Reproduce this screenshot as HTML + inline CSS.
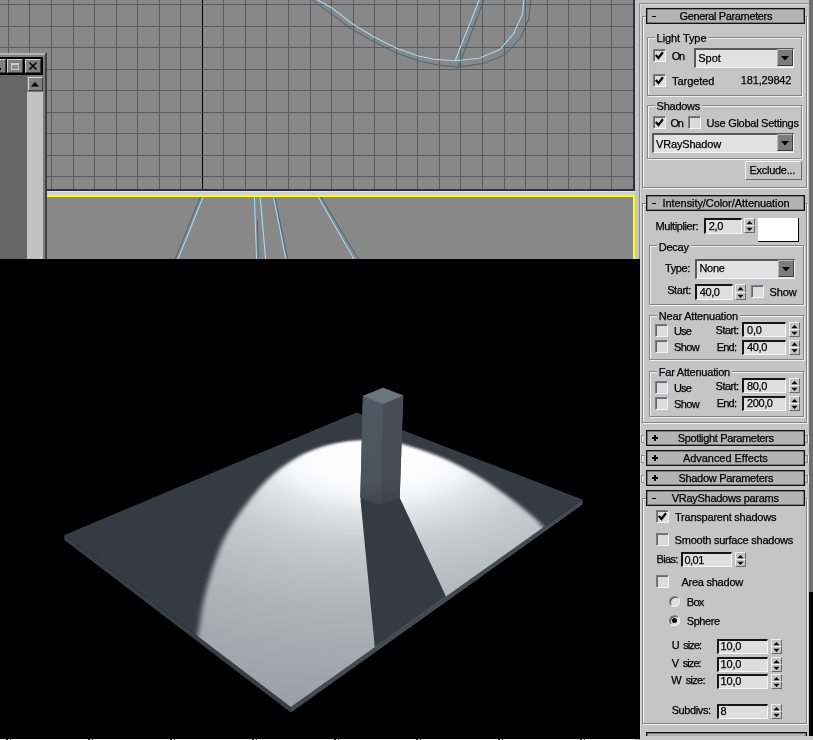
<!DOCTYPE html><html><head><meta charset="utf-8"><title>3ds Max light parameters</title><style>
html,body{margin:0;padding:0;}
body{width:813px;height:740px;overflow:hidden;position:relative;background:#c5c5c5;font-family:"Liberation Sans",sans-serif;font-size:11px;line-height:13px;color:#000;}
.a{position:absolute;}
.t{position:absolute;white-space:nowrap;height:13px;line-height:13px;opacity:.999;-webkit-text-stroke:0.25px #000;}
svg{position:absolute;left:0;top:0;}
.grp{position:absolute;border:1px solid #848484;box-shadow:1px 1px 0 #f2f2f2, inset 1px 1px 0 #f2f2f2;box-sizing:border-box;}
.gl{position:absolute;background:#c5c5c5;height:13px;line-height:13px;white-space:nowrap;padding:0 2px;}
.gl span{opacity:.999;-webkit-text-stroke:0.25px #000;}
.hdr{position:absolute;box-sizing:border-box;border:1px solid #111;background:#b3b3b3;box-shadow:inset 0 0 0 0.5px #444;}
.cb{position:absolute;width:13px;height:13px;box-sizing:border-box;background:#dcdcdc;border-top:1px solid #7c7c7c;border-left:1px solid #7c7c7c;border-right:1px solid #f4f4f4;border-bottom:1px solid #f4f4f4;box-shadow:inset 1px 1px 0 #666a70;}
.fld{position:absolute;box-sizing:border-box;background:#dedede;border-top:2px solid #161616;border-left:2px solid #161616;border-right:1px solid #f6f6f6;border-bottom:1px solid #f6f6f6;}
.dd{position:absolute;box-sizing:border-box;background:#e2e2e2;border-top:2px solid #5a5a5a;border-left:2px solid #5a5a5a;border-right:1px solid #f6f6f6;border-bottom:1px solid #f6f6f6;}
.ddb{position:absolute;box-sizing:border-box;background:#7c7c7c;border-top:1px solid #b8b8b8;border-left:1px solid #b8b8b8;border-right:1px solid #3c3c3c;border-bottom:1px solid #3c3c3c;}
.sp{position:absolute;box-sizing:border-box;width:11px;background:#c2c2c2;border-top:1px solid #f0f0f0;border-left:1px solid #f0f0f0;border-right:1px solid #6a6a6a;border-bottom:1px solid #6a6a6a;}
.btn{position:absolute;box-sizing:border-box;background:#c5c5c5;border-top:1px solid #f4f4f4;border-left:1px solid #f4f4f4;border-right:1px solid #6a6a6a;border-bottom:1px solid #6a6a6a;}
.rd{position:absolute;width:11px;height:11px;box-sizing:border-box;border-radius:50%;background:#e0e0e0;border:1px solid #808080;border-right-color:#f4f4f4;border-bottom-color:#f4f4f4;box-shadow:inset 1px 1px 0 #505050;}
</style></head><body>
<div class="a" style="left:0px;top:0px;width:633px;height:189px;background:#888888;"></div>
<svg width="640" height="260" viewBox="0 0 640 260"><path d="M8.5 0V189 M29.5 0V189 M51.5 0V189 M73.5 0V189 M94.5 0V189 M116.5 0V189 M137.5 0V189 M159.5 0V189 M180.5 0V189 M223.5 0V189 M245.5 0V189 M266.5 0V189 M288.5 0V189 M310.5 0V189 M331.5 0V189 M353.5 0V189 M374.5 0V189 M396.5 0V189 M417.5 0V189 M439.5 0V189 M460.5 0V189 M482.5 0V189 M504.5 0V189 M525.5 0V189 M547.5 0V189 M568.5 0V189 M590.5 0V189 M611.5 0V189 M0 4.5H633 M0 26.5H633 M0 47.5H633 M0 69.5H633 M0 90.5H633 M0 112.5H633 M0 133.5H633 M0 155.5H633 M0 176.5H633" stroke="#5c5c5c" stroke-width="1" fill="none"/><path d="M202.5 0V189" stroke="#000" stroke-width="1" fill="none"/><path d="M312.0 0.0 L332.0 14.4 L351.0 28.8 L373.6 41.6 L396.0 52.8 L418.3 60.8 L437.5 65.0 L458.3 67.2 L483.9 63.3 L504.7 55.0 L520.7 37.7 L528.7 19.2 L530.9 0.0 M458.3 67.2L483.9 0" stroke="#4c6472" stroke-width="1" fill="none"/><path d="M317.6 0.0 L332.0 8.0 L351.2 23.0 L373.6 36.8 L396.0 48.0 L418.3 56.0 L434.3 59.2 L455.1 60.8 L479.1 58.2 L499.9 49.6 L513.6 33.6 L522.3 14.4 L523.9 0.0 M455.1 60.8L479.1 0" stroke="#a6d8f2" stroke-width="1.1" fill="none"/></svg>
<div class="a" style="left:47px;top:189px;width:588px;height:2px;background:#2c3244;"></div>
<div class="a" style="left:633px;top:0px;width:2px;height:191px;background:#2c3244;"></div>
<div class="a" style="left:47px;top:191px;width:588px;height:4px;background:#cfcfd2;"></div>
<div class="a" style="left:47px;top:191px;width:588px;height:1px;background:#e2e4e2;"></div>
<div class="a" style="left:47px;top:195px;width:588px;height:64px;background:#888888;"></div>
<div class="a" style="left:47px;top:195px;width:588px;height:2px;background:#ffff00;"></div>
<div class="a" style="left:633px;top:195px;width:2px;height:64px;background:#ffff00;"></div>
<svg width="640" height="260" viewBox="0 0 640 260"><path d="M200.4 197L175.2 259 M257.6 220L258.2 259 M275 197L287.6 259 M320.8 197L358.3 259" stroke="#4c6472" stroke-width="1" fill="none"/><path d="M203.1 197L178 259 M254.4 197L256.6 259 M260.2 197L265.6 259 M273.6 197L285.8 259 M318.3 197L353.9 259" stroke="#a6d8f2" stroke-width="1.1" fill="none"/></svg>
<div class="a" style="left:0px;top:53px;width:47px;height:206px;background:#808080;"></div>
<div class="a" style="left:0px;top:53px;width:45px;height:2px;background:#b4b4b4;"></div>
<div class="a" style="left:45px;top:53px;width:2px;height:206px;background:#404040;"></div>
<div class="a" style="left:43px;top:55px;width:2px;height:204px;background:#7c7c7c;"></div>
<div class="a" style="left:0px;top:57px;width:43px;height:18px;background:#000;"></div>
<div class="a" style="left:-10px;top:59px;width:16px;height:14px;box-sizing:border-box;background:#808080;border-top:1px solid #d0d0d0;border-left:1px solid #d0d0d0;border-right:1px solid #404040;border-bottom:1px solid #404040;"></div>
<div class="a" style="left:0px;top:68px;width:1px;height:2px;background:#000;"></div>
<div class="a" style="left:7px;top:59px;width:16px;height:14px;box-sizing:border-box;background:#808080;border-top:1px solid #d0d0d0;border-left:1px solid #d0d0d0;border-right:1px solid #404040;border-bottom:1px solid #404040;"></div>
<div class="a" style="left:11px;top:63px;width:8px;height:7px;background:#8c8c8c;box-sizing:border-box;border:1px solid #c8c8c8;border-top-width:2px;"></div>
<div class="a" style="left:25px;top:59px;width:16px;height:14px;box-sizing:border-box;background:#808080;border-top:1px solid #d0d0d0;border-left:1px solid #d0d0d0;border-right:1px solid #404040;border-bottom:1px solid #404040;"></div>
<svg width="60" height="100" viewBox="0 0 60 100"><path d="M29.5 62.5L36.5 69.5M36.5 62.5L29.5 69.5" stroke="#000" stroke-width="1.6" fill="none"/><path d="M31 86H39L35 82Z" fill="#000"/></svg>
<div class="a" style="left:0px;top:75px;width:27px;height:184px;background:#666666;"></div>
<div class="a" style="left:27px;top:75px;width:16px;height:17px;background:#7c7c7c;"></div>
<div class="a" style="left:27px;top:92px;width:16px;height:167px;background:#c2c2c2;"></div>
<div class="a" style="left:28px;top:77px;width:15px;height:14px;box-sizing:border-box;background:#808080;border-top:1px solid #d8d8d8;border-left:1px solid #d8d8d8;border-right:1px solid #404040;border-bottom:1px solid #404040;"></div>
<svg width="60" height="100" viewBox="0 0 60 100"><path d="M31 86.5H39L35 82Z" fill="#000"/></svg>
<div class="a" style="left:0px;top:259px;width:640px;height:480px;background:#000;"></div>
<div class="a" style="left:0px;top:739px;width:640px;height:1px;background:#f4f4f4;"></div>
<div class="a" style="left:6px;top:739px;width:2px;height:1px;background:#222;"></div>
<div class="a" style="left:10px;top:739px;width:1px;height:1px;background:#222;"></div>
<div class="a" style="left:88px;top:739px;width:2px;height:1px;background:#222;"></div>
<div class="a" style="left:92px;top:739px;width:1px;height:1px;background:#222;"></div>
<div class="a" style="left:170px;top:739px;width:2px;height:1px;background:#222;"></div>
<div class="a" style="left:174px;top:739px;width:1px;height:1px;background:#222;"></div>
<div class="a" style="left:252px;top:739px;width:2px;height:1px;background:#222;"></div>
<div class="a" style="left:256px;top:739px;width:1px;height:1px;background:#222;"></div>
<div class="a" style="left:334px;top:739px;width:2px;height:1px;background:#222;"></div>
<div class="a" style="left:338px;top:739px;width:1px;height:1px;background:#222;"></div>
<div class="a" style="left:416px;top:739px;width:2px;height:1px;background:#222;"></div>
<div class="a" style="left:420px;top:739px;width:1px;height:1px;background:#222;"></div>
<div class="a" style="left:498px;top:739px;width:2px;height:1px;background:#222;"></div>
<div class="a" style="left:502px;top:739px;width:1px;height:1px;background:#222;"></div>
<div class="a" style="left:580px;top:739px;width:2px;height:1px;background:#222;"></div>
<div class="a" style="left:584px;top:739px;width:1px;height:1px;background:#222;"></div>
<svg width="640" height="740" viewBox="0 0 640 740"><defs><clipPath id="pl"><path d="M64.4 535L356.6 412.4L582.5 499.5L290.8 706.9Z"/></clipPath><radialGradient id="lg" gradientUnits="userSpaceOnUse" cx="375" cy="447" r="260" gradientTransform="translate(375 447) scale(1.9 1) translate(-375 -447)"><stop offset="0" stop-color="#ffffff"/><stop offset="0.15" stop-color="#fcfcfd"/><stop offset="0.2" stop-color="#f4f5f7"/><stop offset="0.25" stop-color="#e2e5e8"/><stop offset="0.37" stop-color="#c9cdd2"/><stop offset="0.5" stop-color="#babfc5"/><stop offset="0.64" stop-color="#aeb3b9"/><stop offset="0.79" stop-color="#a5aab1"/><stop offset="0.93" stop-color="#9ea4ab"/><stop offset="1" stop-color="#9aa0a7"/></radialGradient><filter id="bl" x="-10%" y="-10%" width="120%" height="120%"><feGaussianBlur stdDeviation="2.8 1"/></filter><filter id="b1" x="-10%" y="-10%" width="120%" height="120%"><feGaussianBlur stdDeviation="0.7"/></filter></defs><path d="M64.4 535L290.8 706.9L290.8 712.5L64.4 540Z" fill="#383e46"/><path d="M290.8 706.9L582.5 499.5L582.5 504.6L290.8 712.5Z" fill="#434a52"/><path d="M64.4 535L356.6 412.4L582.5 499.5L290.8 706.9Z" fill="#353b43"/><g clip-path="url(#pl)"><path d="M150.0 800.0C156.3 783.3 181.0 723.3 188.0 700.0C195.0 676.7 190.3 671.4 192.0 660.0C193.7 648.6 196.5 641.7 198.4 631.8C200.3 621.9 201.0 612.0 203.6 600.8C206.2 589.6 210.0 575.9 213.9 564.7C217.8 553.5 221.2 544.0 226.8 533.7C232.4 523.4 239.8 512.6 247.5 502.7C255.2 492.8 263.8 482.4 273.3 474.2C282.8 466.0 294.0 458.8 304.3 453.6C314.6 448.4 325.8 445.4 335.3 443.2C344.8 441.0 353.7 440.6 361.1 440.2C368.6 439.8 373.5 440.0 380.0 440.5C386.5 441.0 390.1 440.6 399.9 443.2C409.7 445.8 426.1 451.0 438.6 456.2C451.1 461.4 463.6 467.8 474.8 474.2C486.0 480.6 496.3 488.0 505.8 494.9C515.3 501.8 525.1 510.0 531.6 515.6C538.1 521.2 539.8 523.1 544.5 528.5C549.2 533.9 554.9 540.2 560.0 548.0C565.1 555.8 570.8 564.7 575.0 575.0C579.2 585.3 580.8 589.2 585.0 610.0C589.2 630.8 594.2 668.3 600.0 700.0C605.8 731.7 616.7 783.3 620.0 800.0Z" fill="url(#lg)" filter="url(#bl)"/><path d="M362 488L399 488L399.7 497.7L450 605L377 670L360.5 500Z" fill="#353b43" filter="url(#b1)"/></g><linearGradient id="bL" x1="0" y1="396" x2="0" y2="505" gradientUnits="userSpaceOnUse"><stop offset="0" stop-color="#505861"/><stop offset="0.8" stop-color="#4b535b"/><stop offset="1" stop-color="#3f464e"/></linearGradient><linearGradient id="bR" x1="0" y1="396" x2="0" y2="505" gradientUnits="userSpaceOnUse"><stop offset="0" stop-color="#464d55"/><stop offset="0.8" stop-color="#454c54"/><stop offset="1" stop-color="#3b4149"/></linearGradient><path d="M362.9 396L383 387.7L403.2 395.5L399.7 497.7L380.2 504.4L360.3 497.7Z" fill="#4a5159"/><path d="M362.9 396L383 404.2L380.2 504.4L360.3 497.7Z" fill="url(#bL)"/><path d="M383 404.2L403.2 395.5L399.7 497.7L380.2 504.4Z" fill="url(#bR)"/><path d="M362.9 396L383 387.7L403.2 395.5L383 404.2Z" fill="#6c747c"/></svg>
<div class="a" style="left:635px;top:0px;width:178px;height:740px;background:#c5c5c5;"></div>
<div class="a" style="left:635px;top:259px;width:5px;height:480px;background:#000;"></div>
<div class="a" style="left:809px;top:0px;width:4px;height:592px;background:#6e6e6e;"></div>
<div class="a" style="left:809px;top:592px;width:4px;height:144px;background:#000;"></div>
<div class="a" style="left:639px;top:3px;width:170px;height:760px;box-sizing:border-box;border-left:1px solid #8a8a8a;border-top:1px solid #8a8a8a;box-shadow:inset 1px 1px 0 #dadada;"></div>
<div class="a" style="left:639px;top:259px;width:1px;height:480px;background:#000;"></div>
<div class="grp" style="left:642px;top:16px;width:165px;height:172px;"></div>
<div class="hdr" style="left:646px;top:8px;width:159px;height:16px;"></div>
<div class="a" style="left:652px;top:16px;width:4px;height:1px;background:#000;"></div>
<span class="t" style="left:679.5px;top:9.7px;letter-spacing:-0.36px;">General Parameters</span>
<div class="grp" style="left:647px;top:37px;width:155px;height:59px;"></div>
<span class="gl" style="left:654.6px;top:32.4px;letter-spacing:-0.07px;"><span>Light Type</span></span>
<div class="cb" style="left:653px;top:49px;"></div>
<svg width="813" height="740" viewBox="0 0 813 740" style="pointer-events:none"><path d="M655.8 55L658.4 58L662.9 52.3" stroke="#000" stroke-width="2.2" fill="none"/></svg>
<span class="t" style="left:671.7px;top:49.7px;letter-spacing:-1.19px;">On</span>
<div class="dd" style="left:694px;top:48px;width:100px;height:20px;"></div>
<div class="ddb" style="left:777px;top:49px;width:16px;height:17px;"></div>
<svg width="813" height="740" viewBox="0 0 813 740"><path d="M781 56.0H789L785 60.5Z" fill="#000"/></svg>
<span class="t" style="left:698.2px;top:51.7px;">Spot</span>
<div class="cb" style="left:653px;top:74px;"></div>
<svg width="813" height="740" viewBox="0 0 813 740" style="pointer-events:none"><path d="M655.8 80L658.4 83L662.9 77.3" stroke="#000" stroke-width="2.2" fill="none"/></svg>
<span class="t" style="left:672.0px;top:75.2px;letter-spacing:-0.05px;">Targeted</span>
<span class="t" style="left:740.8px;top:74.4px;letter-spacing:-0.17px;">181,29842</span>
<div class="grp" style="left:647px;top:105px;width:155px;height:54px;"></div>
<span class="gl" style="left:654.6px;top:100.1px;letter-spacing:-0.26px;"><span>Shadows</span></span>
<div class="cb" style="left:653px;top:116px;"></div>
<svg width="813" height="740" viewBox="0 0 813 740" style="pointer-events:none"><path d="M655.8 122L658.4 125L662.9 119.3" stroke="#000" stroke-width="2.2" fill="none"/></svg>
<span class="t" style="left:670.5px;top:117.2px;letter-spacing:-1.19px;">On</span>
<div class="cb" style="left:688px;top:116px;"></div>
<span class="t" style="left:706.6px;top:117.2px;letter-spacing:-0.27px;">Use Global Settings</span>
<div class="dd" style="left:652px;top:133px;width:142px;height:20px;"></div>
<div class="ddb" style="left:777px;top:134px;width:16px;height:17px;"></div>
<svg width="813" height="740" viewBox="0 0 813 740"><path d="M781 141.0H789L785 145.5Z" fill="#000"/></svg>
<span class="t" style="left:656.0px;top:137.7px;letter-spacing:-0.17px;">VRayShadow</span>
<div class="btn" style="left:745px;top:161px;width:57px;height:19px;"></div>
<span class="t" style="left:749.4px;top:163.5px;letter-spacing:-0.26px;">Exclude...</span>
<div class="grp" style="left:642px;top:203px;width:165px;height:220px;"></div>
<div class="hdr" style="left:646px;top:195px;width:159px;height:16px;"></div>
<div class="a" style="left:652px;top:203px;width:4px;height:1px;background:#000;"></div>
<span class="t" style="left:662.6px;top:196.7px;letter-spacing:-0.08px;">Intensity/Color/Attenuation</span>
<span class="t" style="left:655.5px;top:219.7px;letter-spacing:-0.41px;">Multiplier:</span>
<div class="fld" style="left:704px;top:218px;width:38px;height:16px;"></div>
<span class="t" style="left:708.8px;top:219.7px;letter-spacing:-0.31px;">2,0</span>
<div class="sp" style="left:744px;top:218px;height:8px;"></div>
<div class="sp" style="left:744px;top:225px;height:8px;"></div>
<svg width="813" height="740" viewBox="0 0 813 740"><path d="M746.5 224.3H752.5L749.5 221Z M746.5 227.7H752.5L749.5 231Z" fill="#000"/></svg>
<div class="a" style="left:758px;top:218px;width:41px;height:24px;box-sizing:border-box;background:#fff;border-right:1px solid #000;border-bottom:1px solid #000;"></div>
<div class="grp" style="left:649px;top:245px;width:155px;height:60px;"></div>
<span class="gl" style="left:656.8px;top:240.5px;letter-spacing:-0.25px;"><span>Decay</span></span>
<span class="t" style="left:665.0px;top:261.9px;letter-spacing:-0.38px;">Type:</span>
<div class="dd" style="left:695px;top:259px;width:100px;height:20px;"></div>
<div class="ddb" style="left:778px;top:260px;width:16px;height:17px;"></div>
<svg width="813" height="740" viewBox="0 0 813 740"><path d="M782 267.0H790L786 271.5Z" fill="#000"/></svg>
<span class="t" style="left:699.4px;top:262.3px;letter-spacing:-0.24px;">None</span>
<span class="t" style="left:667.2px;top:283.7px;letter-spacing:-0.44px;">Start:</span>
<div class="fld" style="left:695px;top:284px;width:38px;height:16px;"></div>
<span class="t" style="left:699.8px;top:285.7px;letter-spacing:-0.41px;">40,0</span>
<div class="sp" style="left:735px;top:284px;height:9px;"></div>
<div class="sp" style="left:735px;top:292px;height:8px;"></div>
<svg width="813" height="740" viewBox="0 0 813 740"><path d="M737.5 290.3H743.5L740.5 287Z M737.5 294.7H743.5L740.5 298Z" fill="#000"/></svg>
<div class="cb" style="left:751px;top:285px;"></div>
<span class="t" style="left:769.6px;top:285.7px;letter-spacing:-0.14px;">Show</span>
<div class="grp" style="left:649px;top:315px;width:155px;height:45px;"></div>
<span class="gl" style="left:656.8px;top:309.5px;letter-spacing:-0.18px;"><span>Near Attenuation</span></span>
<div class="cb" style="left:655px;top:324px;"></div>
<span class="t" style="left:673.9px;top:324.9px;letter-spacing:-0.73px;">Use</span>
<span class="t" style="left:715.6px;top:323.7px;letter-spacing:-0.54px;">Start:</span>
<div class="fld" style="left:742px;top:322px;width:44px;height:15px;"></div>
<span class="t" style="left:747.1px;top:323.7px;letter-spacing:-0.31px;">0,0</span>
<div class="sp" style="left:789px;top:322px;height:8px;"></div>
<div class="sp" style="left:789px;top:329px;height:8px;"></div>
<svg width="813" height="740" viewBox="0 0 813 740"><path d="M791.5 328.3H797.5L794.5 325Z M791.5 331.7H797.5L794.5 335Z" fill="#000"/></svg>
<div class="cb" style="left:655px;top:340px;"></div>
<span class="t" style="left:673.9px;top:340.7px;letter-spacing:-0.54px;">Show</span>
<span class="t" style="left:716.7px;top:341.2px;letter-spacing:-0.79px;">End:</span>
<div class="fld" style="left:742px;top:339.5px;width:44px;height:15px;"></div>
<span class="t" style="left:747.1px;top:341.2px;letter-spacing:-0.38px;">40,0</span>
<div class="sp" style="left:789px;top:339.5px;height:8px;"></div>
<div class="sp" style="left:789px;top:346.5px;height:8px;"></div>
<svg width="813" height="740" viewBox="0 0 813 740"><path d="M791.5 345.8H797.5L794.5 342.5Z M791.5 349.2H797.5L794.5 352.5Z" fill="#000"/></svg>
<div class="grp" style="left:649px;top:371px;width:155px;height:46px;"></div>
<span class="gl" style="left:656.8px;top:365.8px;letter-spacing:-0.23px;"><span>Far Attenuation</span></span>
<div class="cb" style="left:655px;top:380.5px;"></div>
<span class="t" style="left:673.9px;top:381.9px;letter-spacing:-0.73px;">Use</span>
<span class="t" style="left:715.6px;top:379.7px;letter-spacing:-0.54px;">Start:</span>
<div class="fld" style="left:742px;top:378px;width:44px;height:15px;"></div>
<span class="t" style="left:747.1px;top:379.7px;letter-spacing:-0.38px;">80,0</span>
<div class="sp" style="left:789px;top:378px;height:8px;"></div>
<div class="sp" style="left:789px;top:385px;height:8px;"></div>
<svg width="813" height="740" viewBox="0 0 813 740"><path d="M791.5 384.3H797.5L794.5 381Z M791.5 387.7H797.5L794.5 391Z" fill="#000"/></svg>
<div class="cb" style="left:655px;top:397px;"></div>
<span class="t" style="left:673.9px;top:398.1px;letter-spacing:-0.54px;">Show</span>
<span class="t" style="left:716.7px;top:397.1px;letter-spacing:-0.79px;">End:</span>
<div class="fld" style="left:742px;top:396px;width:44px;height:15px;"></div>
<span class="t" style="left:747.1px;top:397.1px;letter-spacing:-0.42px;">200,0</span>
<div class="sp" style="left:789px;top:396px;height:8px;"></div>
<div class="sp" style="left:789px;top:403px;height:8px;"></div>
<svg width="813" height="740" viewBox="0 0 813 740"><path d="M791.5 402.3H797.5L794.5 399Z M791.5 405.7H797.5L794.5 409Z" fill="#000"/></svg>
<div class="hdr" style="left:646px;top:430px;width:159px;height:16px;"></div>
<div class="a" style="left:652px;top:437px;width:6px;height:2px;background:#000;"></div>
<div class="a" style="left:654px;top:435px;width:2px;height:6px;background:#000;"></div>
<span class="t" style="left:677.7px;top:431.7px;letter-spacing:-0.34px;">Spotlight Parameters</span>
<div class="a" style="left:641px;top:435px;width:3px;height:8px;box-sizing:border-box;border:1px solid #8c8c8c;border-right:none;box-shadow:1px 1px 0 #f0f0f0 inset;"></div>
<div class="a" style="left:805px;top:435px;width:3px;height:8px;box-sizing:border-box;border:1px solid #8c8c8c;border-left:none;box-shadow:1px 0 0 #f0f0f0;"></div>
<div class="hdr" style="left:646px;top:450px;width:159px;height:16px;"></div>
<div class="a" style="left:652px;top:457px;width:6px;height:2px;background:#000;"></div>
<div class="a" style="left:654px;top:455px;width:2px;height:6px;background:#000;"></div>
<span class="t" style="left:682.9px;top:451.7px;letter-spacing:-0.04px;">Advanced Effects</span>
<div class="a" style="left:641px;top:455px;width:3px;height:8px;box-sizing:border-box;border:1px solid #8c8c8c;border-right:none;box-shadow:1px 1px 0 #f0f0f0 inset;"></div>
<div class="a" style="left:805px;top:455px;width:3px;height:8px;box-sizing:border-box;border:1px solid #8c8c8c;border-left:none;box-shadow:1px 0 0 #f0f0f0;"></div>
<div class="hdr" style="left:646px;top:470px;width:159px;height:16px;"></div>
<div class="a" style="left:652px;top:477px;width:6px;height:2px;background:#000;"></div>
<div class="a" style="left:654px;top:475px;width:2px;height:6px;background:#000;"></div>
<span class="t" style="left:678.4px;top:471.7px;letter-spacing:-0.29px;">Shadow Parameters</span>
<div class="a" style="left:641px;top:475px;width:3px;height:8px;box-sizing:border-box;border:1px solid #8c8c8c;border-right:none;box-shadow:1px 1px 0 #f0f0f0 inset;"></div>
<div class="a" style="left:805px;top:475px;width:3px;height:8px;box-sizing:border-box;border:1px solid #8c8c8c;border-left:none;box-shadow:1px 0 0 #f0f0f0;"></div>
<div class="grp" style="left:642px;top:498px;width:165px;height:226px;"></div>
<div class="hdr" style="left:646px;top:490px;width:159px;height:16px;"></div>
<div class="a" style="left:652px;top:498px;width:4px;height:1px;background:#000;"></div>
<span class="t" style="left:671.7px;top:491.7px;letter-spacing:-0.27px;">VRayShadows params</span>
<div class="cb" style="left:656px;top:510px;"></div>
<svg width="813" height="740" viewBox="0 0 813 740" style="pointer-events:none"><path d="M658.8 516L661.4 519L665.9 513.3" stroke="#000" stroke-width="2.2" fill="none"/></svg>
<span class="t" style="left:675.0px;top:510.9px;letter-spacing:-0.22px;">Transparent shadows</span>
<div class="cb" style="left:656px;top:533px;"></div>
<span class="t" style="left:674.6px;top:534.1px;letter-spacing:-0.23px;">Smooth surface shadows</span>
<span class="t" style="left:656.6px;top:553.3px;letter-spacing:-0.67px;">Bias:</span>
<div class="fld" style="left:680.5px;top:552px;width:51px;height:15px;"></div>
<span class="t" style="left:684.5px;top:553.7px;letter-spacing:-0.55px;">0,01</span>
<div class="sp" style="left:735px;top:552px;height:8px;"></div>
<div class="sp" style="left:735px;top:559px;height:8px;"></div>
<svg width="813" height="740" viewBox="0 0 813 740"><path d="M737.5 558.3H743.5L740.5 555Z M737.5 561.7H743.5L740.5 565Z" fill="#000"/></svg>
<div class="cb" style="left:656px;top:575px;"></div>
<span class="t" style="left:681.4px;top:576.1px;letter-spacing:-0.24px;">Area shadow</span>
<div class="rd" style="left:669px;top:596px;"></div>
<span class="t" style="left:686.8px;top:596.0px;letter-spacing:-0.73px;">Box</span>
<div class="rd" style="left:669px;top:615px;"></div>
<div class="a" style="left:672px;top:618px;width:5px;height:5px;border-radius:50%;background:#000;"></div>
<span class="t" style="left:686.8px;top:615.2px;letter-spacing:-0.44px;">Sphere</span>
<span class="t" style="left:671.7px;top:638.5px;word-spacing:2.50px;letter-spacing:-0.95px;">U size:</span>
<div class="fld" style="left:717px;top:639px;width:51px;height:15px;"></div>
<span class="t" style="left:720.5px;top:640.0px;letter-spacing:-0.15px;">10,0</span>
<div class="sp" style="left:771px;top:639px;height:8px;"></div>
<div class="sp" style="left:771px;top:646px;height:8px;"></div>
<svg width="813" height="740" viewBox="0 0 813 740"><path d="M773.5 645.3H779.5L776.5 642Z M773.5 648.7H779.5L776.5 652Z" fill="#000"/></svg>
<span class="t" style="left:671.7px;top:656.9px;word-spacing:2.50px;letter-spacing:-0.92px;">V size:</span>
<div class="fld" style="left:717px;top:657px;width:51px;height:15px;"></div>
<span class="t" style="left:720.5px;top:658.1px;letter-spacing:-0.15px;">10,0</span>
<div class="sp" style="left:771px;top:657px;height:8px;"></div>
<div class="sp" style="left:771px;top:664px;height:8px;"></div>
<svg width="813" height="740" viewBox="0 0 813 740"><path d="M773.5 663.3H779.5L776.5 660Z M773.5 666.7H779.5L776.5 670Z" fill="#000"/></svg>
<span class="t" style="left:671.2px;top:674.2px;word-spacing:2.50px;letter-spacing:-0.71px;">W size:</span>
<div class="fld" style="left:717px;top:674px;width:51px;height:15px;"></div>
<span class="t" style="left:720.5px;top:674.9px;letter-spacing:-0.15px;">10,0</span>
<div class="sp" style="left:771px;top:674px;height:8px;"></div>
<div class="sp" style="left:771px;top:681px;height:8px;"></div>
<svg width="813" height="740" viewBox="0 0 813 740"><path d="M773.5 680.3H779.5L776.5 677Z M773.5 683.7H779.5L776.5 687Z" fill="#000"/></svg>
<span class="t" style="left:671.7px;top:703.6px;letter-spacing:-0.40px;">Subdivs:</span>
<div class="fld" style="left:717px;top:704px;width:51px;height:15px;"></div>
<span class="t" style="left:720.5px;top:704.6px;">8</span>
<div class="sp" style="left:771px;top:704px;height:8px;"></div>
<div class="sp" style="left:771px;top:711px;height:8px;"></div>
<svg width="813" height="740" viewBox="0 0 813 740"><path d="M773.5 710.3H779.5L776.5 707Z M773.5 713.7H779.5L776.5 717Z" fill="#000"/></svg>
<div class="hdr" style="left:646px;top:732px;width:161px;height:16px;"></div>
<div class="a" style="left:640px;top:736px;width:173px;height:4px;background:#cbcbcb;"></div>
</body></html>
